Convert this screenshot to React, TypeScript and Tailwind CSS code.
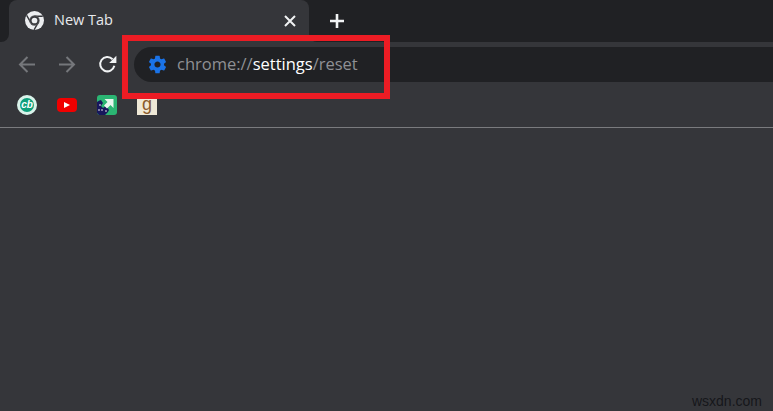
import React from "react";

function ChromeLogo() {
  return (
    <svg width="19" height="19" viewBox="0 0 18 18">
      <circle cx="9" cy="9" r="9" fill="#eceef0" />
      <path d="M9 5h7.800M5.500 11 1.600 4.200M12.500 11 8.600 17.800" stroke="#35363a" strokeWidth="1.300" fill="none" />
      <circle cx="9" cy="9" r="4.900" fill="#55565a" />
      <circle cx="9" cy="9" r="4.100" fill="#35363a" />
      <circle cx="9" cy="9" r="2.700" fill="#eceef0" />
    </svg>
  );
}

function Gear() {
  return (
    <svg width="21" height="21" viewBox="0 0 24 24" fill="#1a73e8">
      <path d="M19.43 12.98c.04-.32.07-.64.07-.98s-.03-.66-.07-.98l2.11-1.65c.19-.15.24-.42.12-.64l-2-3.46c-.12-.22-.39-.3-.61-.22l-2.49 1c-.52-.4-1.08-.73-1.69-.98l-.38-2.65A.49.49 0 0 0 14 2h-4c-.25 0-.46.18-.49.42l-.38 2.65c-.61.25-1.17.59-1.69.98l-2.49-1c-.23-.09-.49 0-.61.22l-2 3.46c-.13.22-.07.49.12.64l2.11 1.65c-.04.32-.07.65-.07.98s.03.66.07.98l-2.11 1.65c-.19.15-.24.42-.12.64l2 3.46c.12.22.39.3.61.22l2.49-1c.52.4 1.08.73 1.69.98l.38 2.65c.03.24.24.42.49.42h4c.25 0 .46-.18.49-.42l.38-2.65c.61-.25 1.17-.59 1.69-.98l2.49 1c.23.09.49 0 .61-.22l2-3.46c.12-.22.07-.49-.12-.64l-2.11-1.65zM12 15.500c-1.93 0-3.500-1.570-3.500-3.500s1.570-3.500 3.500-3.500 3.500 1.570 3.500 3.500-1.570 3.500-3.500 3.500z" />
    </svg>
  );
}

function Arrow({ flip }: { flip?: boolean }) {
  return (
    <svg width="18" height="17" viewBox="0 0 18 17" fill="none" stroke="#75777b" strokeWidth="2" className={flip ? "rotate-180" : ""}>
      <path d="M17 8.500H2M9.500 1 2 8.500l7.500 7.500" />
    </svg>
  );
}

function Reload() {
  return (
    <svg width="19" height="19" viewBox="0 0 18 18" fill="none">
      <path d="M15.500 10.200A6.800 6.800 0 1 1 13.800 4" stroke="#f1f3f4" strokeWidth="1.900" />
      <path d="M17.400 .8v6.800h-6.800z" fill="#f1f3f4" />
    </svg>
  );
}

function Bookmarks() {
  return (
    <div className="flex items-center h-[20px]">
      <div className="ml-[17px] w-[20px] h-[20px] rounded-full bg-[#0f9f7b] border-[3px] border-[#d9f3ea] flex items-center justify-center">
        <span className="text-white text-[10px] font-bold italic leading-none font-['Liberation_Sans',sans-serif]">cb</span>
      </div>
      <div className="ml-[20px] w-[20px] h-[14px] rounded-[4px] bg-[#f00000] flex items-center justify-center">
        <svg width="6" height="6" viewBox="0 0 6 6"><path d="M0 0l6 3-6 3z" fill="#fff" /></svg>
      </div>
      <div className="ml-[20px]">
        <svg width="20" height="20" viewBox="0 0 20 20">
          <rect width="20" height="20" rx="3" fill="#2bb673" />
          <path d="M0 18V7a8 8 0 0 1 4-2l2 3-2 3 2 2 3-2 2 2.500 1 1.500-1 2-3 3H2z" fill="#17175c" />
          <path d="M7.500 4H16.500v9l-3-3-3.500 3.500-3-3 3.500-3.500z" fill="#e8f6ee" />
          <g fill="#fff"><circle cx="3" cy="10" r=".8" /><circle cx="5" cy="15" r=".8" /><circle cx="9" cy="16" r=".8" /><circle cx="2" cy="15" r=".8" /></g>
        </svg>
      </div>
      <div className="ml-[20px] w-[20px] h-[20px] bg-[#efe8d6] flex items-start justify-center">
        <span className="text-[#8a5a2b] text-[18px] leading-none font-['Liberation_Sans',sans-serif]">g</span>
      </div>
    </div>
  );
}

export default function App() {
  return (
    <div className="relative w-[773px] h-[411px] overflow-hidden bg-[#35363a] font-['Open_Sans','Liberation_Sans',sans-serif]">
      <div className="flex h-[42px]">
        <div className="w-[9px] bg-[#202124] rounded-br-[8px]" />
        <div className="relative w-[300px] bg-[#202124]">
          <div className="h-full bg-[#35363a] rounded-t-[8px] flex items-center pl-[16px] pr-[13px] pb-px">
            <ChromeLogo />
            <span className="ml-[10px] text-[14.500px] text-[#e8eaed] leading-none font-['Open_Sans',sans-serif]">New Tab</span>
            <svg className="ml-auto" width="12" height="12" viewBox="0 0 12 12" stroke="#f1f3f4" strokeWidth="2"><path d="M1 1l10 10M11 1 1 11" /></svg>
          </div>
        </div>
        <div className="flex-1 bg-[#202124] rounded-bl-[8px] pl-[20px] flex items-center">
          <svg width="16" height="16" viewBox="0 0 16 16" stroke="#f1f3f4" strokeWidth="2.600"><path d="M8 1v14M1 8h14" /></svg>
        </div>
      </div>
      <div className="h-[85px] border-b border-[#7a7b7e] box-content -mb-px">
        <div className="flex items-center h-[45px] pl-[18px]">
          <Arrow />
          <div className="ml-[22px]"><Arrow flip /></div>
          <div className="ml-[22px]"><Reload /></div>
          <div className="ml-[17px] flex-1 h-[35px] bg-[#202124] rounded-l-full flex items-center pl-[13px]">
            <Gear />
            <span className="ml-[9px] text-[16.500px] leading-none text-[#8f9094] font-['Open_Sans',sans-serif]">
              chrome://<span className="text-white">settings</span>/reset
            </span>
          </div>
        </div>
        <div className="mt-[8px]"><Bookmarks /></div>
      </div>
      <div className="absolute left-[122px] top-[35px] w-[268px] h-[64px] border-[6px] border-[#ec1c24]" />
      <div className="absolute right-[11px] bottom-[3px] text-[14px] leading-none text-[#16171a] font-['Liberation_Sans',sans-serif]">wsxdn.com</div>
    </div>
  );
}
